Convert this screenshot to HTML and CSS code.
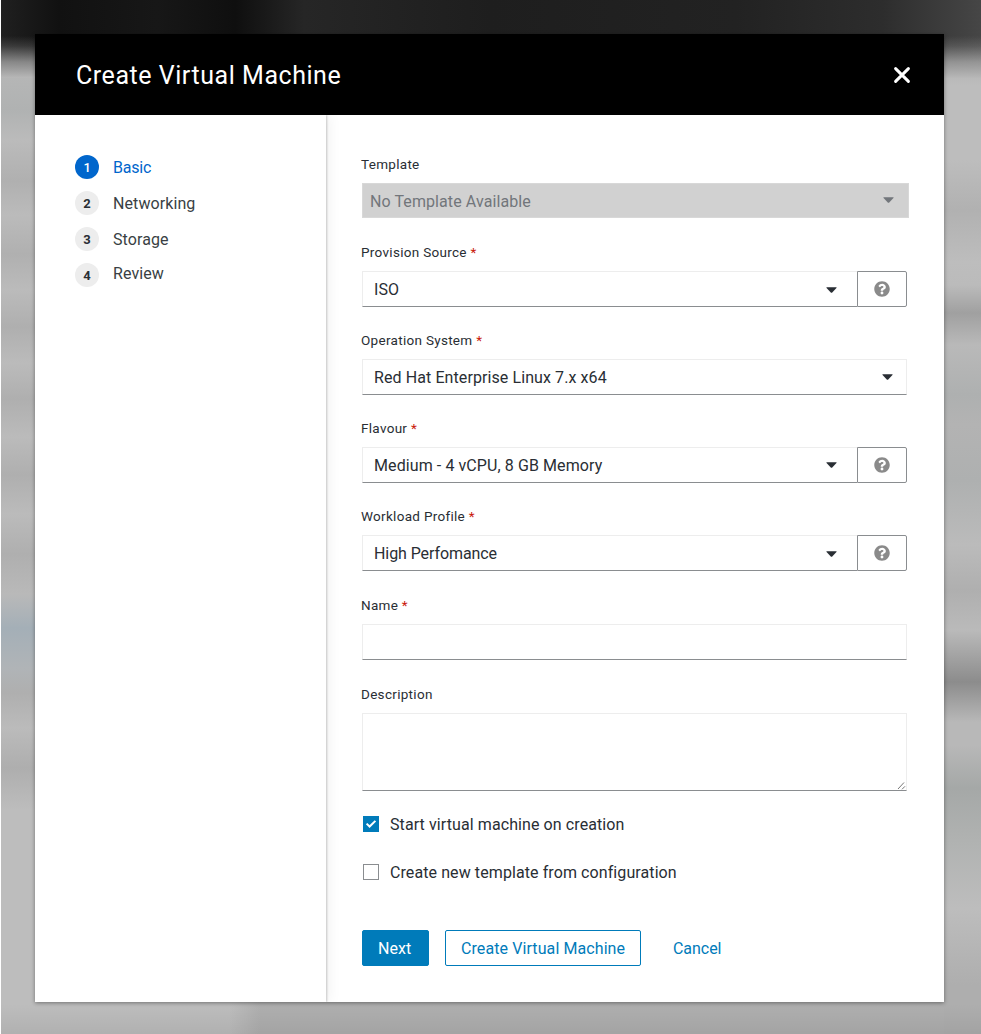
FILE: index.html
```
<!DOCTYPE html>
<html lang="en">
<head>
<meta charset="utf-8">
<title>Create Virtual Machine</title>
<link rel="stylesheet" href="styles.css">
</head>
<body>
<svg class="sprites" aria-hidden="true">
  <symbol id="caret" viewBox="0 0 12 6"><path d="M1 0h10q1 0 .4.8L6.8 5.6q-.8.8-1.6 0L.6.8Q0 0 1 0z" fill="currentColor"/></symbol>
  <symbol id="help" viewBox="0 0 512 512"><path fill="currentColor" d="M504 256c0 136.997-111.043 248-248 248S8 392.997 8 256C8 119.083 119.043 8 256 8s248 111.083 248 248zM262.655 90c-54.497 0-89.255 22.957-116.549 63.758-3.536 5.286-2.353 12.415 2.715 16.258l34.699 26.31c5.205 3.947 12.621 3.008 16.665-2.122 17.864-22.658 30.113-35.797 57.303-35.797 20.429 0 45.698 13.148 45.698 32.958 0 14.976-12.363 22.667-32.534 33.976C247.128 238.528 216 254.941 216 296v4c0 6.627 5.373 12 12 12h56c6.627 0 12-5.373 12-12v-1.333c0-28.462 83.186-29.647 83.186-106.667 0-58.002-60.165-102-116.531-102zM256 338c-25.365 0-46 20.635-46 46 0 25.364 20.635 46 46 46s46-20.636 46-46c0-25.365-20.635-46-46-46z"/></symbol>
</svg>
<main class="modal">
  <header class="modal-header">
    <h1 class="title">Create Virtual Machine</h1>
    <button class="close" aria-label="Close"><svg width="18" height="18" viewBox="0 0 18 18"><path d="M2.6 2.6l12.8 12.8M15.4 2.6L2.6 15.4" stroke="#fff" stroke-width="3" stroke-linecap="round"/></svg></button>
  </header>
  <div class="modal-body">
    <nav class="steps">
      <a class="step active"><span class="num">1</span><span class="step-name">Basic</span></a>
      <a class="step"><span class="num">2</span><span class="step-name">Networking</span></a>
      <a class="step"><span class="num">3</span><span class="step-name">Storage</span></a>
      <a class="step last"><span class="num">4</span><span class="step-name">Review</span></a>
    </nav>
    <form class="form">
      <div class="group">
        <label class="label">Template</label>
        <div class="control disabled"><span>No Template Available</span><svg class="caret"><use href="#caret"/></svg></div>
      </div>
      <div class="group">
        <label class="label">Provision Source <b class="req">*</b></label>
        <div class="row"><div class="control"><span>ISO</span><svg class="caret low"><use href="#caret"/></svg></div><div class="help"><svg width="16" height="16"><use href="#help"/></svg></div></div>
      </div>
      <div class="group">
        <label class="label">Operation System <b class="req">*</b></label>
        <div class="row"><div class="control wide"><span>Red Hat Enterprise Linux 7.x x64</span><svg class="caret"><use href="#caret"/></svg></div></div>
      </div>
      <div class="group">
        <label class="label">Flavour <b class="req">*</b></label>
        <div class="row"><div class="control"><span>Medium - 4 vCPU, 8 GB Memory</span><svg class="caret"><use href="#caret"/></svg></div><div class="help"><svg width="16" height="16"><use href="#help"/></svg></div></div>
      </div>
      <div class="group profile">
        <label class="label">Workload Profile <b class="req">*</b></label>
        <div class="row"><div class="control"><span class="tight">High Perfomance</span><svg class="caret low"><use href="#caret"/></svg></div><div class="help"><svg width="16" height="16"><use href="#help"/></svg></div></div>
      </div>
      <div class="group name">
        <label class="label">Name <b class="req">*</b></label>
        <div class="row"><div class="control wide"></div></div>
      </div>
      <div class="group">
        <label class="label">Description</label>
        <div class="row"><div class="control wide area"><svg width="9" height="9" viewBox="0 0 9 9"><path d="M1 8L7 1.5M5 8.3L8 5.3" stroke="#777" fill="none"/></svg></div></div>
      </div>
      <div class="check"><span class="box checked"><svg width="16" height="16" viewBox="0 0 16 16"><path d="M3.6 7.6l3 2.9L12.4 4.9" stroke="#fff" stroke-width="2" fill="none"/></svg></span><span class="check-text">Start virtual machine on creation</span></div>
      <div class="check"><span class="box"></span><span class="check-text">Create new template from configuration</span></div>
      <div class="actions">
        <a class="btn primary">Next</a><a class="btn outline">Create Virtual Machine</a><a class="btn link">Cancel</a>
      </div>
    </form>
  </div>
</main>
</body>
</html>
```
FILE: styles.css
```
* { box-sizing: border-box; }
body {
  margin: 0;
  height: 1034px;
  padding: 34px 37px 32px 35px;
  overflow: hidden;
  font: 16px/20px Roboto, "Liberation Sans", sans-serif;
  letter-spacing: .09px;
  color: #292e34;
  background:
    linear-gradient(#fff, #fff) 0 0 / 1px 100% no-repeat,
    linear-gradient(#b8b8b800 36px, #b8b8b830 46px, #b8b8b8b0 62px, #b8b8b8 78px) 0 0 / 100% 78px no-repeat,
    linear-gradient(90deg, #202020, #111 6%, #171717 16%, #0f0f0f 24%, #262626 31%, #1e1e1e 50%, #222 75%, #2d2d2d 90%, #464646) 0 0 / 100% 78px no-repeat,
    linear-gradient(#0000, #0001) 0 100% / 100% 30px no-repeat,
    linear-gradient(90deg, #bdbdbd 230px, #afafaf 260px) 0 100% / 944px 40px no-repeat,
    linear-gradient(#b8b8b8 60px, #b0b2b2 110px, #bbb 140px, #b0b0b0 181px, #bbb 215px, #b0b0b0 254px, #bbb 290px, #afafaf 327px, #bbb 363px, #afafaf 399px, #bbb 437px, #afafaf 475px, #bbb 514px, #afafaf 554px, #b9b9b9 594px, #a4afb7 628px, #b0b4b7 668px, #afafaf 693px, #bbb 728px, #aeaeae 768px, #bdbdbd 810px) 0 0 / 50px 100% no-repeat,
    linear-gradient(#b0b0b0 60px, #bdbdbd 85px, #bdbdbd 160px, #b1b1b1 210px, #bdbdbd 262px, #bbb 285px, #a0a0a0 313px, #b9b9b9 345px, #aeb0b0 395px, #b3b3b3 425px, #aeb0b0 480px, #bbb 545px, #afafaf 590px, #bababa 630px, #8c8c8c 682px, #b8b8b8 722px, #b8b8b8 745px, #a5a8a7 788px, #b0b2b1 840px, #bdbdbd 908px, #aeaeae 985px);
}
.sprites { position: absolute; width: 0; height: 0; }
.modal { width: 909px; height: 968px; background: #fff; box-shadow: 0 1px 4px #0006; }
.modal-header { height: 81px; display: flex; align-items: center; justify-content: space-between; padding: 0 33px 0 41px; background: #000; }
.title { margin: 2px 0 0; color: #fff; font-size: 25px; font-weight: 400; line-height: 32px; letter-spacing: .54px; }
.close { display: flex; margin-top: 1px; padding: 0; border: 0; background: none; }
.modal-body { display: flex; height: 887px; }
.steps { width: 291px; padding: 40px; display: flex; flex-direction: column; gap: 12px; box-shadow: 1px 0 2px #0003, 4px 0 12px #0000000d; clip-path: inset(0 -20px 0 0); }
.step { height: 24px; display: flex; align-items: center; gap: 14px; color: #393f44; }
.num { width: 24px; height: 24px; border-radius: 50%; background: #ededed; color: #292e34; font-size: 13px; font-weight: 700; line-height: 25px; text-align: center; }
.step.active { color: #06c; letter-spacing: -.2px; }
.step.active .num { background: #06c; color: #fff; font-weight: 500; }
.step-name { margin-top: 2px; }
.last .step-name { margin-top: -2px; }
.form { padding: 39px 0 0 35px; }
.group { margin-bottom: 23px; }
.group.profile, .group.name { margin-bottom: 24px; }
.label { display: block; height: 20px; margin-bottom: 9px; font-size: 13.5px; letter-spacing: .3px; }
.req { color: #c9190b; font-weight: 400; }
.row { display: flex; margin-left: 1px; width: 545px; }
.control { flex: 1; height: 36px; display: flex; align-items: center; justify-content: space-between; padding: 1px 20px 0 11px; border: 1px solid #ededed; border-right: 0; border-bottom-color: #8a8d90; }
.control.wide { border-right: 1px solid #ededed; padding-right: 13px; }
.control.disabled { width: 547px; height: 35px; margin: 0 0 24px 1px; padding: 2px 14px 0 7px; background: #d1d1d1; border: 1px solid #d8d8d8; color: #72767b; }
.tight { letter-spacing: -.08px; }
.caret { width: 11px; height: 6px; margin-top: -2px; color: #292e34; }
.caret.low { margin-top: 0; }
.disabled .caret { color: #72767b; margin-top: -4px; }
.help { width: 50px; height: 36px; display: flex; align-items: center; justify-content: center; border: 1px solid #8a8d90; border-radius: 0 2px 2px 0; color: #8a8a8a; }
.control.area { height: 78px; align-items: flex-end; justify-content: flex-end; padding: 0; }
.check { height: 20px; margin: 0 0 28px 2px; display: flex; align-items: center; gap: 11px; }
.check-text { margin-top: 2px; }
.box { width: 16px; height: 16px; border: 1px solid #8a8d90; }
.box.checked { border: 0; background: #007bba; }
.box svg { display: block; }
.actions { display: flex; margin: 48px 0 0 1px; }
.btn { height: 36px; border: 1px solid #007bba; border-radius: 2px; padding: 1px 15px 0; line-height: 34px; color: #007bba; }
.primary { width: 67px; margin-right: 16px; background: #007bba; color: #fff; }
.outline { width: 196px; margin-right: 16px; white-space: nowrap; }
.link { border-color: transparent; letter-spacing: -.05px; }
```
